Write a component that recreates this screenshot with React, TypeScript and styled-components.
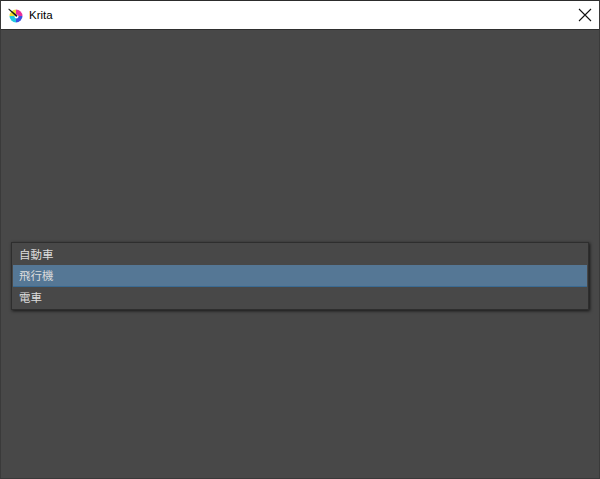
import React from "react"
import styled, { createGlobalStyle } from "styled-components"

const GlobalStyle = createGlobalStyle`
    html, body {
        margin: 0;
        padding: 0;
        background: #484848;
    }
`

const Window = styled.div`
    width: 600px;
    height: 479px;
    box-sizing: border-box;
    border: 1px solid #3a3a3a;
    border-top-color: #2c2c2c;
    display: flex;
    flex-direction: column;
    overflow: hidden;
`

const TitleBar = styled.div`
    height: 28px;
    flex: none;
    box-sizing: content-box;
    background: #ffffff;
    display: flex;
    align-items: center;
    padding: 0 7px;
    gap: 6px;
    border-bottom: 1px solid #2f2f2f;
`

const AppTitle = styled.span`
    font-family: "Liberation Sans", sans-serif;
    font-size: 11.5px;
    color: #000000;
    flex: 1;
`

const CloseButton = styled.button`
    width: 14px;
    height: 14px;
    padding: 0;
    border: 0;
    background: transparent;
    display: flex;
`

const Content = styled.div`
    flex: 1;
    background: #484848;
    display: flex;
    align-items: flex-start;
    padding: 212px 10px 0;
`

const List = styled.ul`
    width: 100%;
    margin: 0;
    padding: 1px;
    list-style: none;
    box-sizing: border-box;
    background: #484848;
    border: 1px solid #2e2e2e;
    box-shadow: 1px 1px 3px rgba(0, 0, 0, 0.7);
`

const Row = styled.li<{ $selected?: boolean }>`
    height: 21px;
    line-height: 21px;
    padding-left: 6px;
    font-family: "Noto Sans CJK TC", "Noto Sans", sans-serif;
    font-size: 11.5px;
    color: #dcdcdc;
    background: ${({ $selected }) => ($selected ? "#557795" : "transparent")};
    border-bottom: ${({ $selected }) => ($selected ? "1px solid #3a6a92" : "0")};
`

function KritaIcon() {
    return (
        <svg width="15" height="15" viewBox="0 0 15 15">
            <path d="M8 8 L8 1.5 A6.5 6.5 0 0 1 14.5 8 Z" fill="#e8309a" />
            <path d="M8 8 L14.5 8 A6.5 6.5 0 0 1 8 14.5 Z" fill="#3a50e0" />
            <path d="M8 8 L8 14.5 A6.5 6.5 0 0 1 1.5 8 Z" fill="#20c8e0" />
            <path d="M8 8 L1.5 8 A6.5 6.5 0 0 1 8 1.5 Z" fill="#f0e030" />
            <circle cx="8.5" cy="8.5" r="2" fill="#ffffff" />
            <path d="M0.8 0.6 L9.6 7.6 L8.4 9 L0.4 1.6 Z" fill="#1c1c1c" />
        </svg>
    )
}

export default function App() {
    return (
        <>
            <GlobalStyle />
            <Window>
                <TitleBar>
                    <KritaIcon />
                    <AppTitle>Krita</AppTitle>
                    <CloseButton aria-label="Close">
                        <svg width="14" height="14" viewBox="0 0 14 14">
                            <path
                                d="M1 1 L13 13 M13 1 L1 13"
                                stroke="#111111"
                                strokeWidth="1.1"
                                fill="none"
                            />
                        </svg>
                    </CloseButton>
                </TitleBar>
                <Content>
                    <List>
                        <Row>自動車</Row>
                        <Row $selected>飛行機</Row>
                        <Row>電車</Row>
                    </List>
                </Content>
            </Window>
        </>
    )
}
